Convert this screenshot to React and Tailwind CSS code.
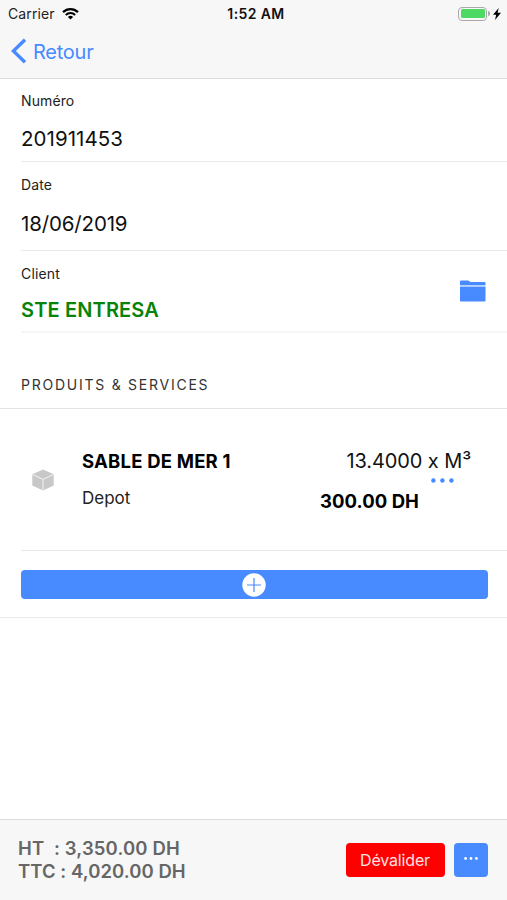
import React from 'react';

const INVOICE = {
  number: '201911453',
  date: '18/06/2019',
  client: 'STE ENTRESA',
  ht: '3,350.00 DH',
  ttc: '4,020.00 DH',
};

const LINES = [
  { id: 1, name: 'SABLE DE MER 1', place: 'Depot', quantity: '13.4000 x M³', price: '300.00 DH' },
];

const StatusBar = () => (
  <div className="flex h-[27px] items-center justify-between pl-2 pr-[5px] text-black">
    <div className="flex w-[180px] items-center gap-[7px]">
      <span className="text-[14px] tracking-[0.1px] text-[#222]">Carrier</span>
      <svg className="h-[13px] w-[17px]" viewBox="0 0 17 13">
        <path d="M1 5.1a10.8 10.8 0 0 1 15 0" fill="none" stroke="#000" strokeWidth="2.2" />
        <path d="M3.8 7.9a6.7 6.7 0 0 1 9.4 0" fill="none" stroke="#000" strokeWidth="2.1" />
        <path d="M5.9 10a3.7 3.7 0 0 1 5.2 0L8.5 12.6z" fill="#000" />
      </svg>
    </div>
    <span className="pl-[2px] text-[14px] font-semibold tracking-[0.4px] text-[#111]">1:52 AM</span>
    <div className="flex w-[180px] items-center justify-end">
      <div className="h-[14px] w-[29px] rounded-[4px] border border-[#a9a9a9] p-[1.5px]">
        <div className="h-full w-full rounded-[1.5px] bg-[#4cd964]" />
      </div>
      <div className="ml-px h-[5px] w-[2px] rounded-r-full bg-[#a9a9a9]" />
      <svg className="ml-[3px] mr-px h-[12px] w-[8px]" viewBox="0 0 8 12">
        <path d="M5.7 0 0 6.8h3.2L2 12l6-7.2H4.6z" fill="#000" />
      </svg>
    </div>
  </div>
);

const Header = () => (
  <header className="h-[79px] border-b border-[#dcdcdc] bg-[#f7f7f7]">
    <StatusBar />
    <button className="flex h-[48px] items-center gap-[6px] pl-[11px] text-[#488aff]">
      <svg className="h-[26px] w-[16px]" viewBox="0 0 16 26">
        <path d="M14 1.8 2.4 13 14 24.2" fill="none" stroke="currentColor" strokeWidth="3.4" />
      </svg>
      <span className="pt-px text-[20px] leading-[26px] tracking-[-0.25px]">Retour</span>
    </button>
  </header>
);

const FolderIcon = () => (
  <svg className="h-[22px] w-[26px]" viewBox="0 0 26 22">
    <path d="M0 5V1.5Q0 .5 1 .5h7.3L10.5 2h14q1 0 1 1v2z" fill="#488aff" />
    <path d="M0 6.4h25.5v14.4q0 .7-.7.7H.7q-.7 0-.7-.7z" fill="#488aff" />
    <path d="M0 5h25.5v1.4H0z" fill="#b5d3ff" />
  </svg>
);

const BoxIcon = () => (
  <svg className="h-[22px] w-[22px]" viewBox="0 0 22 22">
    <path d="M11 .5 21.7 5.2v11.4L11 21.5.3 16.6V5.2z" fill="#c8c8c8" />
    <path d="M.6 5.5 11 10.4l10.4-4.9M11 10.4v11" fill="none" stroke="#f2f2f2" strokeWidth="1" />
  </svg>
);

const Details = () => (
  <section className="pl-[21px] text-black">
    <div className="h-[83px] border-b border-[#ebebeb] pt-3">
      <p className="text-[14px] leading-5 tracking-[0.1px] text-[#222]">Numéro</p>
      <p className="mt-4 text-[20.5px] leading-6 tracking-[0.05px] text-[#111]">{INVOICE.number}</p>
    </div>
    <div className="h-[89px] border-b border-[#ebebeb] pt-[13px]">
      <p className="text-[14px] leading-5 tracking-[0.1px] text-[#222]">Date</p>
      <p className="mt-[17px] text-[20.5px] leading-6 tracking-[-0.15px] text-[#111]">{INVOICE.date}</p>
    </div>
    <div className="flex h-[82px] justify-between border-b-2 border-[#f6f6f6] pr-[21px] pt-[13px]">
      <div>
        <p className="text-[14px] leading-5 tracking-[0.15px] text-[#222]">Client</p>
        <p className="mt-[14px] text-[20px] font-semibold leading-6 tracking-[0.15px] text-[#078307]">{INVOICE.client}</p>
      </div>
      <div className="pt-4">
        <FolderIcon />
      </div>
    </div>
  </section>
);

const ProductLine = ({ line }) => (
  <div className="ml-[21px] flex h-[142px] border-b border-[#e8e8e8]">
    <div className="w-[61px] pl-[11px] pt-[60px]">
      <BoxIcon />
    </div>
    <div className="flex-1 pt-10">
      <p className="text-[18.5px] font-bold leading-6 tracking-[0.2px] text-black">{line.name}</p>
      <p className="mt-[13px] text-[17px] leading-6 text-[#222]">{line.place}</p>
    </div>
    <div className="flex w-[187px] flex-col pr-[36px] pt-10">
      <p className="self-end whitespace-nowrap text-[20px] leading-6 tracking-[-0.1px] text-[#111]">{line.quantity}</p>
      <svg className="mr-[17px] mt-[5px] h-[5px] w-[23px] self-end" viewBox="0 0 23 5" fill="#488aff">
        <circle cx="2.4" cy="2.5" r="2.2" />
        <circle cx="11.4" cy="2.5" r="2.2" />
        <circle cx="20.4" cy="2.5" r="2.2" />
      </svg>
      <p className="mt-[6px] text-[18.5px] font-bold leading-6 tracking-[0.05px] text-black">{line.price}</p>
    </div>
  </div>
);

const Footer = () => (
  <footer className="flex h-[81px] items-center justify-between border-t border-[#dcdcdc] bg-[#f7f7f7] pl-[18px] pr-[19.5px]">
    <div className="whitespace-pre text-[18.5px] font-semibold leading-[23px] text-[#666]">
      <p className="tracking-[0.15px]">{`HT  : ${INVOICE.ht}`}</p>
      <p className="tracking-[0.05px]">{`TTC : ${INVOICE.ttc}`}</p>
    </div>
    <div className="flex gap-[9px]">
      <button className="h-[34px] w-[99px] rounded-[4px] bg-[#f00] text-[16px] tracking-[-0.15px] text-[#ffe0e0]">Dévalider</button>
      <button className="flex h-[34px] w-[34px] items-center justify-center rounded-[4px] bg-[#488aff] pb-[3px]">
        <svg className="h-[3px] w-[14px]" viewBox="0 0 14 3" fill="#fff">
          <circle cx="1.6" cy="1.5" r="1.4" />
          <circle cx="7" cy="1.5" r="1.4" />
          <circle cx="12.4" cy="1.5" r="1.4" />
        </svg>
      </button>
    </div>
  </footer>
);

const App = () => (
  <div className="flex h-[900px] w-[507px] flex-col overflow-hidden bg-white font-['Inter','Liberation_Sans',sans-serif]">
    <Header />
    <main className="flex-1">
      <Details />

      {/* Products and services */}
      <div className="flex h-[76px] items-end border-b border-[#e3e3e3] pb-[13px] pl-[21px]">
        <h2 className="text-[14px] leading-5 tracking-[1.75px] text-[#333]">PRODUITS &amp; SERVICES</h2>
      </div>
      {LINES.map((line) => (
        <ProductLine key={line.id} line={line} />
      ))}
      <div className="border-b border-[#ebebeb] pb-[18px] pl-[20.5px] pr-[19.5px] pt-[19px]">
        <button className="flex h-[29px] w-full items-center justify-center rounded-[4px] bg-[#488aff] pr-px">
          <svg className="h-6 w-6" viewBox="0 0 24 24">
            <circle cx="12" cy="12" r="11.7" fill="#fff" />
            <path d="M12 5v14M5 12h14" stroke="#488aff" strokeWidth="1.2" />
          </svg>
        </button>
      </div>
    </main>
    <Footer />
  </div>
);

export default App;
